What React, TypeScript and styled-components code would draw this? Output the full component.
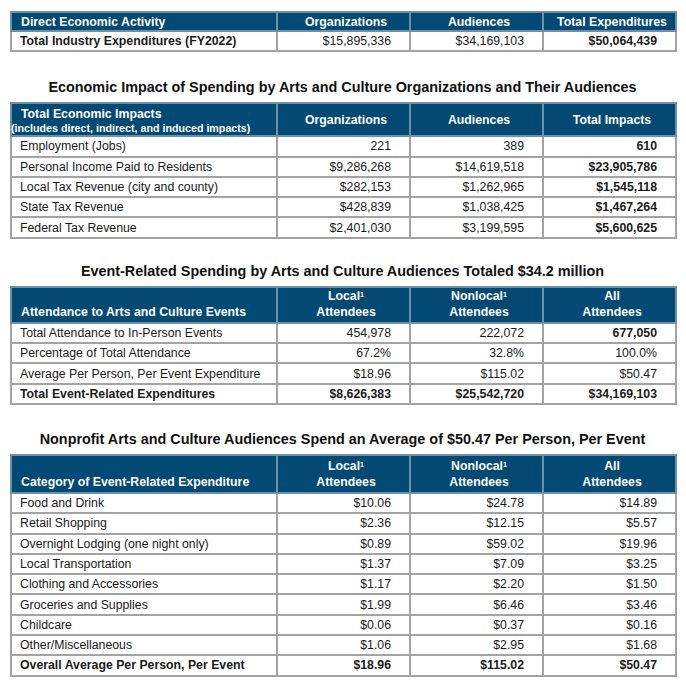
import React from "react";
import styled, { createGlobalStyle } from "styled-components";

const Global = createGlobalStyle`
  html, body { margin: 0; padding: 0; background: #ffffff; }
  body { font-family: "Liberation Sans", Arial, sans-serif; color: #111; }
`;

const Page = styled.div`
  width: 686px;
  padding: 11px 11px 0 10px;
  box-sizing: border-box;
  display: flex;
  flex-direction: column;
`;

const Title = styled.h2<{ $top: number; $bottom: number }>`
  margin: ${(p) => p.$top}px 0 ${(p) => p.$bottom}px;
  font-size: 14.4px;
  line-height: 20px;
  font-weight: 700;
  text-align: center;
  color: #111;
`;

const Table = styled.table`
  width: 665px;
  border-collapse: collapse;
  table-layout: fixed;
  font-size: 12.3px;
`;

const HeadRow = styled.tr<{ $h: number }>`
  height: ${(p) => p.$h}px;
  background: #024a73;
`;

const Th = styled.th<{ $align?: "left" | "center"; $valign?: "middle" | "bottom" }>`
  color: #fff;
  font-weight: 700;
  font-size: 12.3px;
  line-height: 16px;
  padding: 0 4px ${(p) => (p.$valign === "middle" ? "0" : "2px")} 9px;
  vertical-align: ${(p) => p.$valign || "bottom"};
  text-align: ${(p) => p.$align || "center"};
  border: 2px solid #6e91ab;
  white-space: nowrap;
`;

const SubHead = styled.span`
  display: block;
  font-size: 10.7px;
  line-height: 12px;
  margin-left: -10px;
`;

const Sup = styled.sup`
  font-size: 7px;
  vertical-align: top;
  position: relative;
  top: -1px;
`;

const Row = styled.tr`
  height: 20.3px;
`;

const Td = styled.td<{ $bold?: boolean; $left?: boolean }>`
  border: 2px solid #a3a3a3;
  padding: 0 ${(p) => (p.$left ? "6px" : "18px")} 0 ${(p) => (p.$left ? "8px" : "6px")};
  text-align: ${(p) => (p.$left ? "left" : "right")};
  font-weight: ${(p) => (p.$bold ? 700 : 400)};
  line-height: 16px;
  color: #1a1a1a;
  white-space: nowrap;
`;

const Col = styled.col<{ $w: number }>`
  width: ${(p) => p.$w}px;
`;

const Cols = () => (
  <colgroup>
    <Col $w={266} />
    <Col $w={133} />
    <Col $w={133} />
    <Col $w={133} />
  </colgroup>
);

type RowData = {
  label: string;
  vals: string[];
  bold?: boolean;
  boldLabel?: boolean;
  boldLast?: boolean;
};

const BodyRows = ({ rows }: { rows: RowData[] }) => (
  <tbody>
    {rows.map((r) => (
      <Row key={r.label}>
        <Td $left $bold={r.bold || r.boldLabel}>
          {r.label}
        </Td>
        {r.vals.map((v, i) => (
          <Td key={i} $bold={r.bold || (r.boldLast && i === r.vals.length - 1)}>
            {v}
          </Td>
        ))}
      </Row>
    ))}
  </tbody>
);

const AttendeeHeads = () => (
  <>
    <Th>
      Local<Sup>1</Sup>
      <br />
      Attendees
    </Th>
    <Th>
      Nonlocal<Sup>1</Sup>
      <br />
      Attendees
    </Th>
    <Th>
      All
      <br />
      Attendees
    </Th>
  </>
);

const direct: RowData[] = [
  {
    label: "Total Industry Expenditures (FY2022)",
    vals: ["$15,895,336", "$34,169,103", "$50,064,439"],
    boldLabel: true,
    boldLast: true,
  },
];

const impacts: RowData[] = [
  { label: "Employment (Jobs)", vals: ["221", "389", "610"], boldLast: true },
  { label: "Personal Income Paid to Residents", vals: ["$9,286,268", "$14,619,518", "$23,905,786"], boldLast: true },
  { label: "Local Tax Revenue (city and county)", vals: ["$282,153", "$1,262,965", "$1,545,118"], boldLast: true },
  { label: "State Tax Revenue", vals: ["$428,839", "$1,038,425", "$1,467,264"], boldLast: true },
  { label: "Federal Tax Revenue", vals: ["$2,401,030", "$3,199,595", "$5,600,625"], boldLast: true },
];

const attendance: RowData[] = [
  { label: "Total Attendance to In-Person Events", vals: ["454,978", "222,072", "677,050"], boldLast: true },
  { label: "Percentage of Total Attendance", vals: ["67.2%", "32.8%", "100.0%"] },
  { label: "Average Per Person, Per Event Expenditure", vals: ["$18.96", "$115.02", "$50.47"] },
  { label: "Total Event-Related Expenditures", vals: ["$8,626,383", "$25,542,720", "$34,169,103"], bold: true },
];

const categories: RowData[] = [
  { label: "Food and Drink", vals: ["$10.06", "$24.78", "$14.89"] },
  { label: "Retail Shopping", vals: ["$2.36", "$12.15", "$5.57"] },
  { label: "Overnight Lodging (one night only)", vals: ["$0.89", "$59.02", "$19.96"] },
  { label: "Local Transportation", vals: ["$1.37", "$7.09", "$3.25"] },
  { label: "Clothing and Accessories", vals: ["$1.17", "$2.20", "$1.50"] },
  { label: "Groceries and Supplies", vals: ["$1.99", "$6.46", "$3.46"] },
  { label: "Childcare", vals: ["$0.06", "$0.37", "$0.16"] },
  { label: "Other/Miscellaneous", vals: ["$1.06", "$2.95", "$1.68"] },
  { label: "Overall Average Per Person, Per Event", vals: ["$18.96", "$115.02", "$50.47"], bold: true },
];

export default function App() {
  return (
    <Page>
      <Global />
      <Table>
        <Cols />
        <thead>
          <HeadRow $h={19}>
            <Th $align="left" $valign="middle">Direct Economic Activity</Th>
            <Th $valign="middle">Organizations</Th>
            <Th $valign="middle">Audiences</Th>
            <Th $valign="middle">Total Expenditures</Th>
          </HeadRow>
        </thead>
        <BodyRows rows={direct} />
      </Table>

      <Title $top={25} $bottom={5}>
        Economic Impact of Spending by Arts and Culture Organizations and Their Audiences
      </Title>
      <Table>
        <Cols />
        <thead>
          <HeadRow $h={33}>
            <Th $align="left" $valign="middle">
              Total Economic Impacts
              <SubHead>(includes direct, indirect, and induced impacts)</SubHead>
            </Th>
            <Th $valign="middle">Organizations</Th>
            <Th $valign="middle">Audiences</Th>
            <Th $valign="middle">Total Impacts</Th>
          </HeadRow>
        </thead>
        <BodyRows rows={impacts} />
      </Table>

      <Title $top={22} $bottom={5}>
        Event-Related Spending by Arts and Culture Audiences Totaled $34.2 million
      </Title>
      <Table>
        <Cols />
        <thead>
          <HeadRow $h={35}>
            <Th $align="left">Attendance to Arts and Culture Events</Th>
            <AttendeeHeads />
          </HeadRow>
        </thead>
        <BodyRows rows={attendance} />
      </Table>

      <Title $top={24} $bottom={5}>
        Nonprofit Arts and Culture Audiences Spend an Average of $50.47 Per Person, Per Event
      </Title>
      <Table>
        <Cols />
        <thead>
          <HeadRow $h={38}>
            <Th $align="left">Category of Event-Related Expenditure</Th>
            <AttendeeHeads />
          </HeadRow>
        </thead>
        <BodyRows rows={categories} />
      </Table>
    </Page>
  );
}
